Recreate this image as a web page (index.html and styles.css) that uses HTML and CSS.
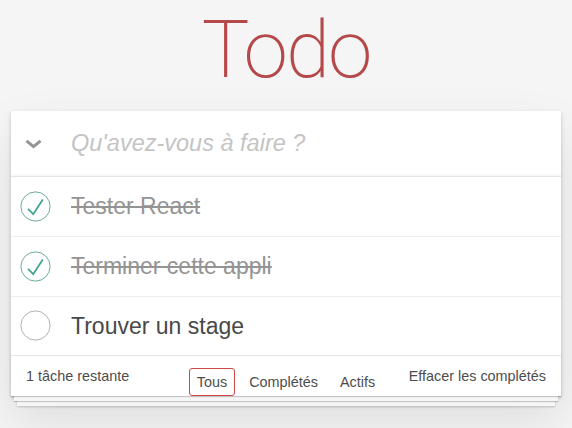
FILE: index.html
```html
<!DOCTYPE html>
<html lang="fr">
<head>
<meta charset="utf-8">
<title>Todo</title>
<link rel="stylesheet" href="styles.css">
</head>
<body>
<div class="page">
  <h1 class="title">Todo</h1>
  <section class="card">
    <header class="entry">
      <span class="toggle-all" aria-label="Tout cocher">
        <svg width="17" height="10" viewBox="0 0 17 10"><path d="M1.5 1.8 L8.5 7.6 L15.5 1.8" fill="none" stroke="#949494" stroke-width="3"/></svg>
      </span>
      <input class="new-todo" type="text" placeholder="Qu'avez-vous à faire ?">
    </header>
    <ul class="list">
      <li class="item done">
        <svg class="check" width="31" height="31" viewBox="-2 -2 104 104"><circle cx="50" cy="50" r="49" fill="none" stroke="#59A193" stroke-width="3"/><path fill="#3EA390" d="M72 25L42 71 27 56l-4 4 20 20 34-52z"/></svg>
        <span class="label">Tester React</span>
      </li>
      <li class="item done">
        <svg class="check" width="31" height="31" viewBox="-2 -2 104 104"><circle cx="50" cy="50" r="49" fill="none" stroke="#59A193" stroke-width="3"/><path fill="#3EA390" d="M72 25L42 71 27 56l-4 4 20 20 34-52z"/></svg>
        <span class="label">Terminer cette appli</span>
      </li>
      <li class="item">
        <svg class="check" width="31" height="31" viewBox="-2 -2 104 104"><circle cx="50" cy="50" r="49" fill="none" stroke="#a8a8a8" stroke-width="3"/></svg>
        <span class="label">Trouver un stage</span>
      </li>
    </ul>
    <footer class="footer">
      <span class="count">1 tâche restante</span>
      <ul class="filters">
        <li><a class="filter selected" href="#">Tous</a></li>
        <li><a class="filter" href="#">Complétés</a></li>
        <li><a class="filter" href="#">Actifs</a></li>
      </ul>
      <span class="clear">Effacer les complétés</span>
    </footer>
  </section>
</div>
</body>
</html>
```
FILE: styles.css
```css
html, body {
  margin: 0;
  padding: 0;
}
body {
  background: #f5f5f5;
  color: #4d4d4d;
  font-family: "Liberation Sans", Arial, Helvetica, sans-serif;
  font-size: 14.4px;
}
.page {
  width: 550px;
  margin: 0 auto;
  padding-bottom: 40px;
}
.title {
  margin: 0;
  height: 111px;
  box-sizing: border-box;
  padding-top: 10px;
  font-family: Roboto, "Liberation Sans", sans-serif;
  font-weight: 200;
  font-size: 80px;
  line-height: 80px;
  letter-spacing: -2px;
  text-align: center;
  color: #b5484a;
}
.card {
  background: #fff;
  box-shadow: 0 2px 4px 0 rgba(0,0,0,0.2), 0 25px 50px 0 rgba(0,0,0,0.1);
}
.entry {
  display: flex;
  align-items: center;
  height: 65px;
  box-shadow: inset 0 -2px 1px rgba(0,0,0,0.03);
}
.toggle-all {
  width: 45px;
  display: flex;
  justify-content: center;
  align-items: center;
}
.toggle-all svg {
  display: block;
}
.new-todo {
  flex: 1;
  border: none;
  outline: none;
  background: transparent;
  margin: 0 0 0 15px;
  padding: 0;
  font-family: inherit;
  font-size: 23.5px;
  line-height: 33.6px;
  color: #4d4d4d;
}
.new-todo::placeholder {
  font-style: italic;
  color: #c4c4c4;
}
.list {
  list-style: none;
  margin: 0;
  padding: 0;
  border-top: 1px solid #e6e6e6;
}
.item {
  display: flex;
  align-items: center;
  padding-left: 9px;
  border-bottom: 1px solid #ededed;
}
.check {
  display: block;
  flex: none;
}
.label {
  padding: 15px 15px 15px 20px;
  font-size: 23px;
  line-height: 28.8px;
  color: #484848;
}
.done .label {
  color: #949494;
  text-decoration: line-through;
}
.footer {
  display: grid;
  grid-template-columns: 1fr auto 1fr;
  align-items: start;
  height: 40px;
  padding: 0 15px;
  border-top: 1px solid #e6e6e6;
  margin-top: -1px;
  line-height: 20px;
  box-shadow: 0 1px 1px rgba(0,0,0,0.2), 0 8px 0 -3px #f6f6f6, 0 9px 1px -3px rgba(0,0,0,0.2), 0 16px 0 -6px #f6f6f6, 0 17px 2px -6px rgba(0,0,0,0.2);
}
.count {
  justify-self: start;
  padding-top: 10px;
}
.clear {
  justify-self: end;
  padding-top: 10px;
}
.filters {
  display: flex;
  list-style: none;
  margin: 12px 0 0 0;
  padding: 0;
}
.filter {
  display: block;
  margin: 0 3px;
  padding: 3px 7px;
  border: 1px solid transparent;
  border-radius: 3px;
  color: inherit;
  text-decoration: none;
}
.filter.selected {
  border-color: #ce4646;
}
```
